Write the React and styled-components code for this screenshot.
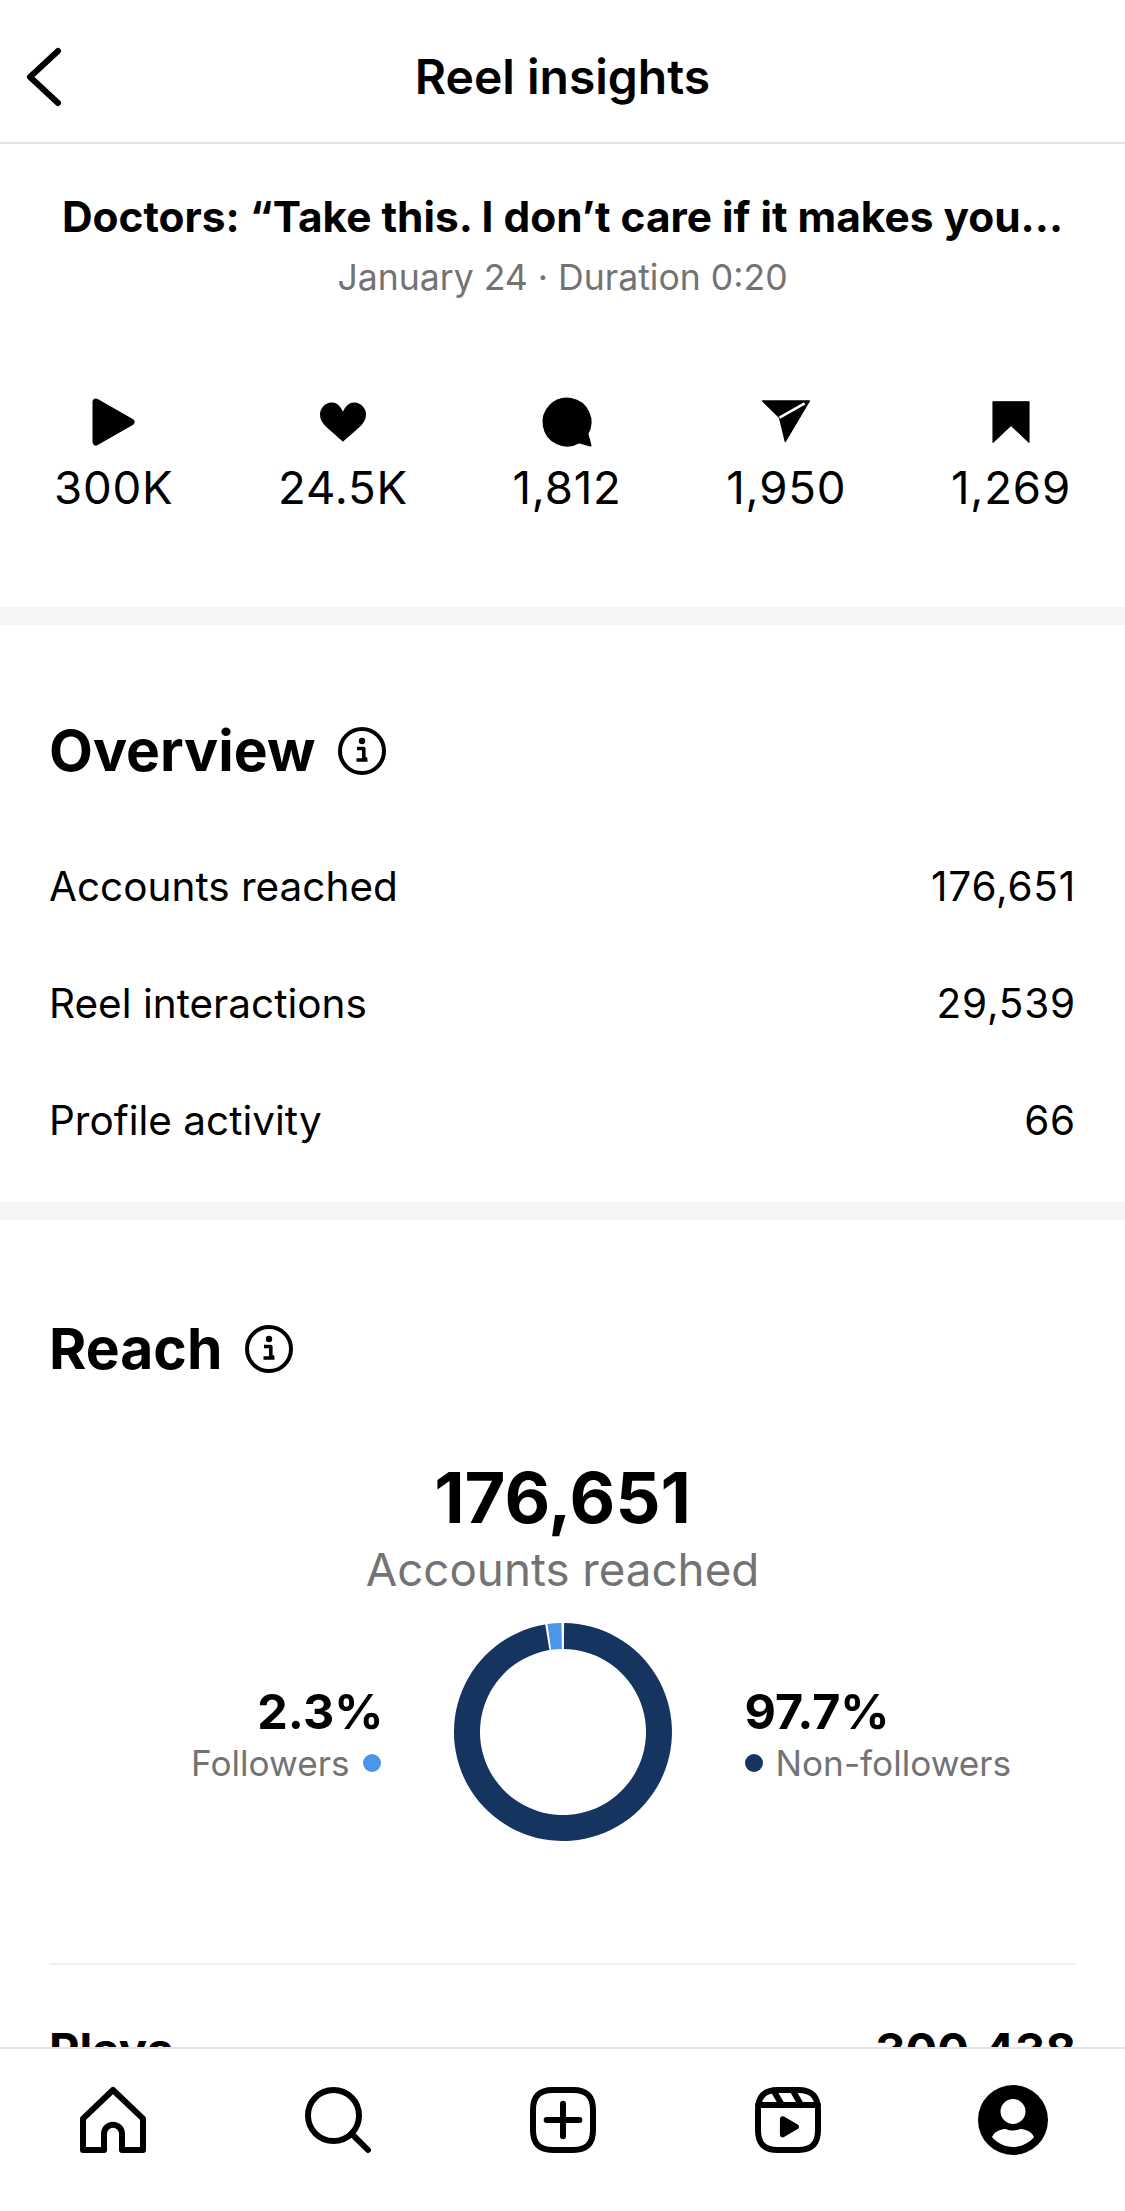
import styled, { createGlobalStyle } from "styled-components";

const GlobalStyle = createGlobalStyle`
  html, body { margin: 0; padding: 0; background: #fff; }
  * { box-sizing: border-box; }
`;

const Page = styled.div`
  width: 1125px;
  height: 2211px;
  display: flex;
  flex-direction: column;
  overflow: hidden;
  background: #fff;
  color: #000;
  font-family: Inter, "Liberation Sans", sans-serif;
`;
const Header = styled.header`
  height: 144px;
  flex: none;
  display: grid;
  grid-template-columns: 90px 1fr 90px;
  align-items: center;
  padding-top: 12px;
  border-bottom: 2px solid #e4e4e4;
`;
const BackButton = styled.div`
  display: flex;
  padding-left: 24px;
`;
const HeaderTitle = styled.h1`
  margin: 0;
  font-size: 48px;
  line-height: 56px;
  font-weight: 600;
  text-align: center;
`;
const Scroll = styled.main`
  flex: 1;
  min-height: 0;
  overflow: hidden;
`;
const ReelInfo = styled.div`
  padding-top: 49px;
  text-align: center;
`;
const ReelTitle = styled.div`
  font-size: 42.4px;
  line-height: 48px;
  font-weight: 700;
`;
const ReelDate = styled.div`
  margin-top: 16px;
  font-size: 35.6px;
  line-height: 42px;
  color: #737373;
`;
const Stats = styled.div`
  display: flex;
  justify-content: space-between;
  margin-top: 93px;
  padding: 0 54px;
  height: 215px;
`;
const Stat = styled.div`
  display: flex;
  flex-direction: column;
  align-items: center;
`;
const StatIcon = styled.div`
  height: 60px;
  display: flex;
  align-items: center;
  justify-content: center;
`;
const StatValue = styled.div`
  margin-top: 8px;
  font-size: 45.6px;
  line-height: 56px;
  letter-spacing: 0.8px;
`;
const Divider = styled.div`
  height: 18px;
  background: #f5f5f5;
`;
const Section = styled.section`
  padding: 0 49px;
`;
const SectionHead = styled.div`
  display: flex;
  align-items: center;
  gap: 23px;
  height: 72px;
  margin-top: ${(p) => p.$top}px;
`;
const SectionTitle = styled.h2`
  margin: 0;
  font-size: 57px;
  line-height: 72px;
  font-weight: 700;
`;
const Rows = styled.div`
  margin-top: 41px;
  height: 374px;
`;
const Row = styled.div`
  display: flex;
  justify-content: space-between;
  align-items: center;
  height: 117px;
  font-size: 40.5px;
`;
const RowValue = styled.span`
  letter-spacing: 0.8px;
`;
const ReachTotal = styled.div`
  margin-top: 71px;
  font-size: 70.5px;
  line-height: 84px;
  font-weight: 700;
  text-align: center;
`;
const ReachLabel = styled.div`
  margin-top: 2px;
  font-size: 45.7px;
  line-height: 56px;
  color: #737373;
  text-align: center;
`;
const DonutRow = styled.div`
  display: grid;
  grid-template-columns: 1fr 220px 1fr;
  column-gap: 72px;
  align-items: center;
  margin: 24px -49px 0;
  height: 220px;
`;
const Legend = styled.div`
  display: flex;
  flex-direction: column;
  align-items: ${(p) => (p.$right ? "flex-end" : "flex-start")};
  padding-top: 4px;
`;
const LegendValue = styled.div`
  font-size: 48.5px;
  line-height: 56px;
  font-weight: 700;
  margin-right: ${(p) => (p.$right ? "-3px" : "0")};
`;
const LegendLabel = styled.div`
  display: flex;
  align-items: center;
  gap: 13px;
  margin-top: 1px;
  font-size: 35.2px;
  line-height: 44px;
  color: #737373;
`;
const Dot = styled.span`
  width: 18px;
  height: 18px;
  border-radius: 50%;
  background: ${(p) => p.$color};
`;
const Rule = styled.div`
  height: 2px;
  margin-top: 121px;
  background: #efefef;
`;
const PlaysRow = styled.div`
  display: flex;
  justify-content: space-between;
  margin-top: 57px;
  font-size: 47px;
  line-height: 56px;
  font-weight: 700;
`;
const BottomNav = styled.nav`
  height: 164px;
  flex: none;
  display: grid;
  grid-template-columns: repeat(5, 1fr);
  align-items: center;
  justify-items: center;
  padding-bottom: 21px;
  background: #fff;
  border-top: 2px solid #e4e4e4;
`;

function PlayIcon() {
  return (
    <svg width="43" height="48" viewBox="0 0 43 48">
      <path d="M4 4 L39 24 L4 44 Z" fill="#000" stroke="#000" strokeWidth="7" strokeLinejoin="round" />
    </svg>
  );
}

function HeartIcon() {
  return (
    <svg width="58" height="58" viewBox="0 0 24 24">
      <path d="M16.792 3.904A4.989 4.989 0 0 1 21.5 9.122c0 3.072-2.652 4.959-5.197 7.222-2.512 2.243-3.865 3.469-4.303 3.752-.477-.309-2.143-1.823-4.303-3.752C5.141 14.072 2.5 12.167 2.5 9.122a4.989 4.989 0 0 1 4.708-5.218 4.21 4.21 0 0 1 3.675 1.941c.84 1.175.98 1.763 1.12 1.763s.278-.588 1.11-1.766a4.17 4.17 0 0 1 3.679-1.938Z" fill="#000" />
    </svg>
  );
}

function CommentIcon() {
  return (
    <svg width="56" height="56" viewBox="0 0 24 24">
      <path d="M20.656 17.008a9.993 9.993 0 1 0-3.59 3.615L22 22Z" fill="#000" stroke="#000" strokeLinejoin="round" />
    </svg>
  );
}

function SendIcon() {
  return (
    <svg width="56" height="56" viewBox="0 0 24 24">
      <polygon points="11.698 20.334 22 3.001 2 3.001 9.218 10.084 11.698 20.334" fill="#000" stroke="#000" strokeWidth="0.6" strokeLinejoin="round" />
      <line x1="20" y1="4" x2="9.218" y2="10.083" stroke="#fff" strokeWidth="1.1" />
    </svg>
  );
}

function BookmarkIcon() {
  return (
    <svg width="54" height="54" viewBox="0 0 24 24">
      <polygon points="20 21 12 13.44 4 21 4 3 20 3 20 21" fill="#000" stroke="#000" strokeWidth="0.5" strokeLinejoin="round" />
    </svg>
  );
}

function BackIcon() {
  return (
    <svg width="40" height="60" viewBox="0 0 40 60" fill="none" stroke="#000" strokeWidth="6" strokeLinecap="round" strokeLinejoin="round">
      <polyline points="34,4 6,30 34,56" />
    </svg>
  );
}

function InfoIcon() {
  return (
    <svg width="48" height="48" viewBox="0 0 48 48">
      <circle cx="24" cy="24" r="22" fill="none" stroke="#000" strokeWidth="4" />
      <circle cx="24" cy="14" r="3.2" fill="#000" />
      <path d="M19 21.5h6.8V32H29M18.5 33h11" fill="none" stroke="#000" strokeWidth="3.6" strokeLinejoin="round" />
    </svg>
  );
}

const polar = (r, deg) => {
  const a = (deg * Math.PI) / 180;
  return `${(110 + r * Math.sin(a)).toFixed(2)} ${(110 - r * Math.cos(a)).toFixed(2)}`;
};

const arc = (from, to) => {
  const large = to - from > 180 ? 1 : 0;
  return `M${polar(109, from)} A109 109 0 ${large} 1 ${polar(109, to)} L${polar(83, to)} A83 83 0 ${large} 0 ${polar(83, from)} Z`;
};

function Donut() {
  return (
    <svg width="220" height="220" viewBox="0 0 220 220">
      <path d={arc(0.6, 350.6)} fill="#15345f" />
      <path d={arc(351.8, 359.2)} fill="#4a96ea" />
    </svg>
  );
}

function NavIcon({ children }) {
  return (
    <svg width="72" height="72" viewBox="0 0 24 24" fill="none" stroke="#000" strokeWidth="2" strokeLinecap="round" strokeLinejoin="round">
      {children}
    </svg>
  );
}

const roundedSquare =
  "M2 12v3.45c0 2.849.698 4.005 1.606 4.944.94.909 2.098 1.608 4.946 1.608h6.896c2.848 0 4.006-.7 4.946-1.608C21.302 19.455 22 18.3 22 15.45V8.552c0-2.849-.698-4.006-1.606-4.945C19.454 2.7 18.296 2 15.448 2H8.552c-2.848 0-4.006.699-4.946 1.607C2.698 4.547 2 5.703 2 8.552Z";

const stats = [
  { value: "300K", icon: <PlayIcon /> },
  { value: "24.5K", icon: <HeartIcon /> },
  { value: "1,812", icon: <CommentIcon /> },
  { value: "1,950", icon: <SendIcon /> },
  { value: "1,269", icon: <BookmarkIcon /> },
];

const overview = [
  ["Accounts reached", "176,651"],
  ["Reel interactions", "29,539"],
  ["Profile activity", "66"],
];

const App = () => {
  return (
    <Page>
      <GlobalStyle />
      <Header>
        <BackButton>
          <BackIcon />
        </BackButton>
        <HeaderTitle>Reel insights</HeaderTitle>
      </Header>
      <Scroll>
        <ReelInfo>
          <ReelTitle>Doctors: “Take this. I don’t care if it makes you...</ReelTitle>
          <ReelDate>January 24 · Duration 0:20</ReelDate>
        </ReelInfo>
        <Stats>
          {stats.map((s) => (
            <Stat key={s.value}>
              <StatIcon>{s.icon}</StatIcon>
              <StatValue>{s.value}</StatValue>
            </Stat>
          ))}
        </Stats>
        <Divider />
        <Section>
          <SectionHead $top={90}>
            <SectionTitle>Overview</SectionTitle>
            <InfoIcon />
          </SectionHead>
          <Rows>
            {overview.map(([label, value]) => (
              <Row key={label}>
                <span>{label}</span>
                <RowValue>{value}</RowValue>
              </Row>
            ))}
          </Rows>
        </Section>
        <Divider />
        <Section>
          <SectionHead $top={93}>
            <SectionTitle>Reach</SectionTitle>
            <InfoIcon />
          </SectionHead>
          <ReachTotal>176,651</ReachTotal>
          <ReachLabel>Accounts reached</ReachLabel>
          <DonutRow>
            <Legend $right>
              <LegendValue $right>2.3%</LegendValue>
              <LegendLabel>
                Followers
                <Dot $color="#4a96ea" />
              </LegendLabel>
            </Legend>
            <Donut />
            <Legend>
              <LegendValue>97.7%</LegendValue>
              <LegendLabel>
                <Dot $color="#15345f" />
                Non-followers
              </LegendLabel>
            </Legend>
          </DonutRow>
          <Rule />
          <PlaysRow>
            <span>Plays</span>
            <span>300,438</span>
          </PlaysRow>
        </Section>
      </Scroll>
      <BottomNav>
        <NavIcon>
          <path d="M9.005 16.545a2.997 2.997 0 0 1 2.997-2.997A2.997 2.997 0 0 1 15 16.545V22h7V11.543L12 2 2 11.543V22h7.005Z" />
        </NavIcon>
        <NavIcon>
          <path d="M19 10.5A8.5 8.5 0 1 1 10.5 2a8.5 8.5 0 0 1 8.5 8.5Z" />
          <line x1="16.511" y1="16.511" x2="22" y2="22" />
        </NavIcon>
        <NavIcon>
          <path d={roundedSquare} />
          <line x1="6.545" y1="12.001" x2="17.455" y2="12.001" />
          <line x1="12.003" y1="6.545" x2="12.003" y2="17.455" />
        </NavIcon>
        <NavIcon>
          <line x1="2.049" y1="7.002" x2="21.95" y2="7.002" />
          <line x1="13.504" y1="2.001" x2="16.362" y2="7.002" />
          <line x1="7.207" y1="2.266" x2="10.002" y2="7.002" />
          <path d={roundedSquare} />
          <path d="M9.763 17.664a.908.908 0 0 1-.454-.787V11.63a.909.909 0 0 1 1.364-.788l4.545 2.624a.909.909 0 0 1 0 1.575l-4.545 2.624a.91.91 0 0 1-.91 0Z" fill="#000" stroke="none" />
        </NavIcon>
        <svg width="72" height="72" viewBox="0 0 72 72">
          <path fillRule="evenodd" d="M36 1a35 35 0 1 0 0 70 35 35 0 0 0 0-70Z M36 15a12.5 12.5 0 1 1 0 25 12.5 12.5 0 0 1 0-25Z M15 53c3-7 11-8 14-8 4 2 10 2 14 0 3 0 11 1 14 8-5 6-13 10-21 10s-16-4-21-10Z" fill="#000" />
        </svg>
      </BottomNav>
    </Page>
  );
};

export default App;
